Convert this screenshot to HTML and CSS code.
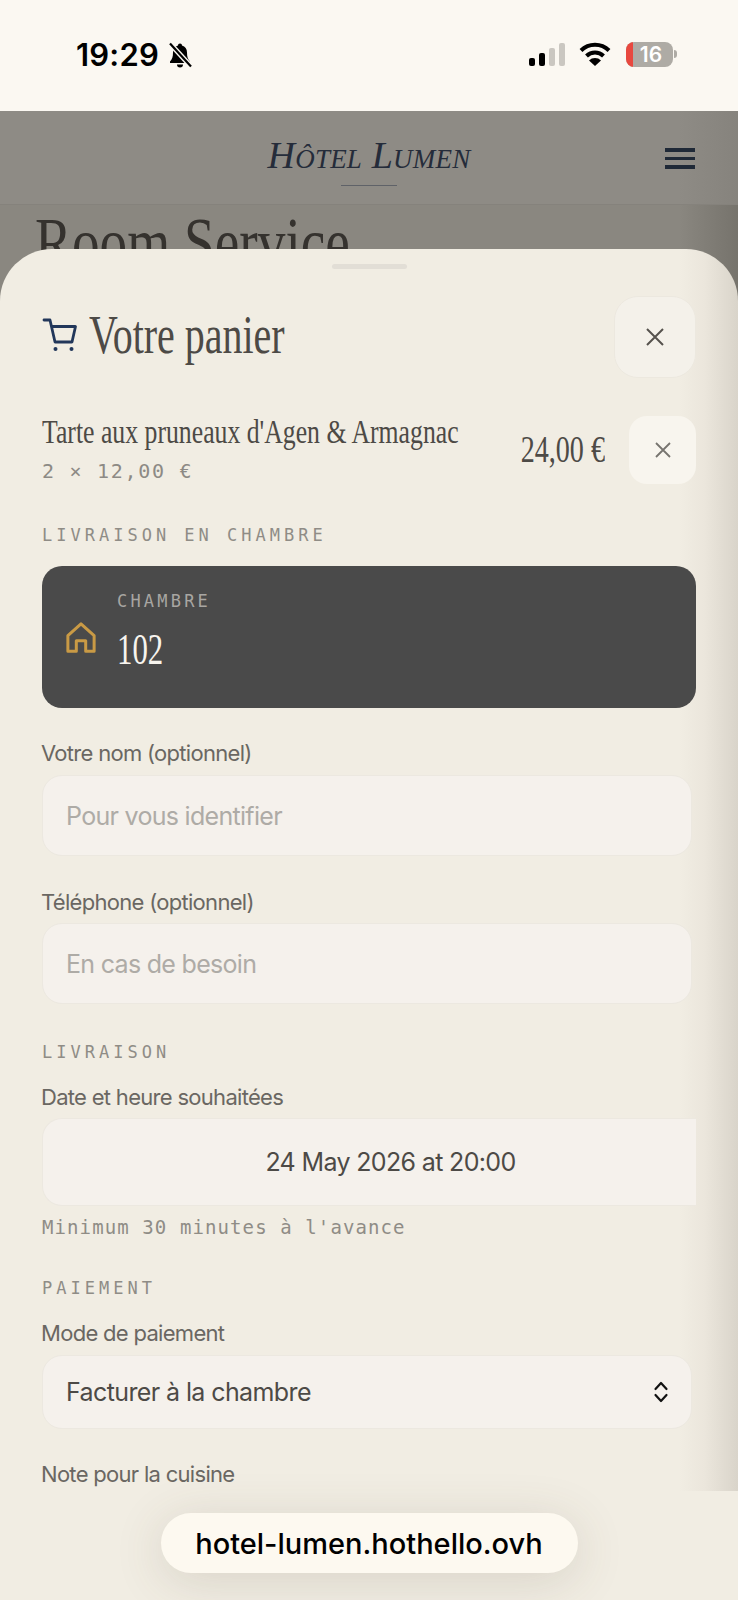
FILE: index.html
```html
<!DOCTYPE html>
<html lang="fr">
<head>
  <meta charset="UTF-8">
  <meta name="viewport" content="width=device-width, initial-scale=1.0">
  <title>Hôtel Lumen - Votre panier</title>
  <link rel="stylesheet" href="styles.css">
</head>
<body>
  <div class="statusbar">
    <div class="status-left">
      <span class="time">19:29</span>
      <svg class="bell" width="26" height="26" viewBox="0 0 26 26">
        <path d="M13 1.500c-1.200 0-2 .8-2 1.900C7.800 4.300 6 7 6 10.400c0 4.300-.8 6.600-3 9v1.600h20v-1.600c-2.200-2.400-3-4.700-3-9 0-3.400-1.800-6.100-5-7 0-1.100-.8-1.900-2-1.900z" fill="#000"/>
        <path d="M10 22.500a3 3 0 0 0 6 0z" fill="#000"/>
        <path d="M3 1.500l21 23" stroke="#fbf8f2" stroke-width="5"/>
        <path d="M3 1.500l21 23" stroke="#000" stroke-width="2.200"/>
      </svg>
    </div>
    <div class="status-right">
      <div class="signal">
        <span class="bar bar1"></span>
        <span class="bar bar2"></span>
        <span class="bar bar3"></span>
        <span class="bar bar4"></span>
      </div>
      <svg class="wifi" width="32" height="24" viewBox="0 0 32 24">
        <path d="M2 8.500a20 20 0 0 1 28 0" fill="none" stroke="#000" stroke-width="4"/>
        <path d="M7.500 14a12 12 0 0 1 17 0" fill="none" stroke="#000" stroke-width="4"/>
        <path d="M16 24l-6-5.500a8.500 8.500 0 0 1 12 0z" fill="#000"/>
      </svg>
      <div class="battery"><span class="battery-red"></span><span class="battery-num">16</span></div>
      <span class="battery-nub"></span>
    </div>
  </div>

  <header class="topbar">
    <div class="brand">
      <div class="brand-name">Hôtel Lumen</div>
      <div class="brand-line"></div>
    </div>
    <div class="burger"><span></span><span></span><span></span></div>
  </header>
  <div class="page-behind">
    <h1 class="page-title">Room Service</h1>
  </div>

  <section class="sheet">
    <div class="handle"></div>

    <div class="sheet-head">
      <div class="sheet-title">
        <svg class="cart" width="36" height="36" viewBox="0 0 36 36" fill="none" stroke="#22375a" stroke-width="2.800" stroke-linecap="round" stroke-linejoin="round">
          <path d="M2 3h6l5 22h17l3.500-15.500H9.500"/>
          <circle cx="13.500" cy="32" r="2" fill="#22375a" stroke="none"/>
          <circle cx="29.500" cy="32" r="2" fill="#22375a" stroke="none"/>
        </svg>
        <h2 class="serif title-text">Votre panier</h2>
      </div>
      <button class="close-btn">
        <svg width="20" height="20" viewBox="0 0 20 20"><path d="M2 2l16 16M18 2L2 18" stroke="#55524d" stroke-width="2"/></svg>
      </button>
    </div>

    <div class="item">
      <div class="item-info">
        <div class="serif item-name">Tarte aux pruneaux d'Agen &amp; Armagnac</div>
        <div class="item-sub">2 × 12,00 €</div>
      </div>
      <div class="serif item-price">24,00 €</div>
      <button class="remove-btn">
        <svg width="16" height="16" viewBox="0 0 16 16"><path d="M1 1l14 14M15 1L1 15" stroke="#77746f" stroke-width="1.800"/></svg>
      </button>
    </div>

    <div class="section-label first">LIVRAISON EN CHAMBRE</div>
    <div class="room-card">
      <svg class="home" width="30" height="32" viewBox="0 0 32 34" fill="none" stroke="#c99a45" stroke-width="3.200" stroke-linejoin="round">
        <path d="M2 14.500L16 2l14 12.500V31H21V20H11v11H2z"/>
      </svg>
      <div class="room-text">
        <div class="room-label">CHAMBRE</div>
        <div class="serif room-num">102</div>
      </div>
    </div>

    <label class="field-label first-field" for="nom">Votre nom (optionnel)</label>
    <input class="field" id="nom" type="text" placeholder="Pour vous identifier">

    <label class="field-label second-field" for="tel">Téléphone (optionnel)</label>
    <input class="field" id="tel" type="text" placeholder="En cas de besoin">

    <div class="section-label delivery">LIVRAISON</div>
    <div class="field-label tight">Date et heure souhaitées</div>
    <div class="date-field"><span>24 May 2026 at 20:00</span></div>
    <div class="hint">Minimum 30 minutes à l'avance</div>

    <div class="section-label payment">PAIEMENT</div>
    <div class="field-label tight">Mode de paiement</div>
    <div class="select-field">
      <span>Facturer à la chambre</span>
      <svg width="16" height="22" viewBox="0 0 16 22" fill="none" stroke="#111" stroke-width="2.200" stroke-linecap="round" stroke-linejoin="round">
        <path d="M2.500 8L8 2l5.500 6M2.500 14L8 20l5.500-6"/>
      </svg>
    </div>

    <div class="field-label note">Note pour la cuisine</div>
  </section>

  <footer class="urlbar">
    <div class="url-pill">hotel-lumen.hothello.ovh</div>
  </footer>
</body>
</html>
```

FILE: styles.css
```css
/* Base */
html, body {
  margin: 0;
  padding: 0;
  height: 1600px;
  overflow: hidden;
}
body {
  position: relative;
  font-family: Inter, "Noto Sans", sans-serif;
  background-color: #87847d;
}
h1, h2 {
  margin: 0;
  font-weight: 400;
}
button {
  padding: 0;
  border: none;
  display: flex;
  align-items: center;
  justify-content: center;
}
.serif {
  font-family: "Liberation Serif", serif;
  transform-origin: left center;
}

/* Status bar */
.statusbar {
  height: 111px;
  box-sizing: border-box;
  padding: 40px 61px 0 76px;
  background-color: #fbf8f2;
  display: flex;
  justify-content: space-between;
  align-items: flex-start;
}
.status-left {
  display: flex;
  align-items: center;
  gap: 8px;
}
.time {
  font-size: 31px;
  line-height: 30px;
  font-weight: 600;
  letter-spacing: 0.2px;
  color: #000;
}
.status-right {
  display: flex;
  align-items: flex-start;
  padding-top: 2px;
}
.signal {
  display: flex;
  align-items: flex-end;
  gap: 4px;
  height: 24px;
  margin-right: 14px;
}
.bar {
  width: 6px;
  border-radius: 2px;
  background-color: #000;
}
.bar1 { height: 8px; }
.bar2 { height: 13px; }
.bar3 { height: 18px; background-color: #cac7c1; }
.bar4 { height: 23px; background-color: #cac7c1; }
.wifi {
  margin-right: 15px;
}
.battery {
  position: relative;
  width: 47px;
  height: 25px;
  border-radius: 8px;
  overflow: hidden;
  background-color: #aeaba5;
  display: flex;
  align-items: center;
  justify-content: center;
}
.battery-red {
  position: absolute;
  left: 0;
  top: 0;
  bottom: 0;
  width: 7px;
  background-color: #e8483f;
}
.battery-num {
  font-size: 21px;
  font-weight: 600;
  color: #fff;
  padding-left: 3px;
}
.battery-nub {
  width: 3px;
  height: 8px;
  margin: 8px 0 0 1px;
  border-radius: 0 3px 3px 0;
  background-color: #aeaba5;
}

/* Page behind the sheet */
.topbar {
  height: 94px;
  box-sizing: border-box;
  padding: 24px 43px 0;
  background: linear-gradient(to right, #8e8b85 92%, #86837d 100%);
  border-bottom: 1px solid #85827c;
  display: grid;
  grid-template-columns: 1fr auto 1fr;
}
.brand {
  grid-column: 2;
  display: flex;
  flex-direction: column;
  align-items: center;
}
.brand-name {
  font-family: "Liberation Serif", serif;
  font-style: italic;
  font-variant: small-caps;
  font-size: 38px;
  line-height: 40px;
  letter-spacing: 0.2px;
  color: #252c3a;
  white-space: nowrap;
}
.brand-line {
  width: 56px;
  height: 1px;
  margin-top: 10px;
  background-color: #5f6268;
}
.burger {
  grid-column: 3;
  justify-self: end;
  width: 30px;
  padding-top: 13px;
  display: flex;
  flex-direction: column;
  gap: 5px;
}
.burger span {
  height: 3.500px;
  background-color: #1f2937;
}
.page-behind {
  height: 120px;
  padding: 0 0 0 35px;
  background: linear-gradient(to right, #8a8780 92%, #76736c 100%);
}
.page-title {
  font-family: "Liberation Serif", serif;
  font-size: 70px;
  line-height: 76px;
  color: #35322e;
  white-space: nowrap;
  transform: scaleX(.79);
  transform-origin: left center;
}

/* Sheet */
.sheet {
  position: absolute;
  left: 0;
  right: 0;
  top: 249px;
  height: 1351px;
  box-sizing: border-box;
  padding: 15px 42px 0;
  border-radius: 52px 52px 0 0;
  background: linear-gradient(to right, #f1ede3 92%, #ebe6dc 95.500%, #d9d4ca 100%);
  overflow: hidden;
}
.handle {
  width: 75px;
  height: 5px;
  margin: 0 auto;
  border-radius: 3px;
  background-color: #e2ded6;
}
.sheet-head {
  display: flex;
  justify-content: space-between;
  align-items: center;
  margin-top: 27px;
}
.sheet-title {
  display: flex;
  align-items: center;
  gap: 11px;
  margin-top: -4px;
}
.title-text {
  font-size: 54px;
  line-height: 60px;
  color: #4d4a46;
  white-space: nowrap;
  transform: scaleX(.74);
}
.close-btn {
  width: 82px;
  height: 82px;
  box-sizing: border-box;
  border: 1px solid #ece8df;
  border-radius: 24px;
  background-color: #f4f1ea;
}

/* Cart line */
.item {
  display: flex;
  align-items: center;
  height: 68px;
  margin-top: 38px;
}
.item-info {
  flex: 1;
  min-width: 0;
}
.item-name {
  font-size: 34px;
  line-height: 30px;
  margin-bottom: 12px;
  color: #4d4a46;
  white-space: nowrap;
  transform: scaleX(.757);
}
.item-sub {
  font-family: "DejaVu Sans Mono", monospace;
  font-size: 20px;
  line-height: 24px;
  letter-spacing: 1.700px;
  color: #8d8a85;
}
.item-price {
  margin-right: 24px;
  font-size: 37px;
  line-height: 40px;
  color: #4d4a46;
  white-space: nowrap;
  transform: scaleX(.76);
  transform-origin: right center;
}
.remove-btn {
  width: 67px;
  height: 68px;
  flex-shrink: 0;
  border-radius: 18px;
  background-color: #f8f5ee;
}

/* Section titles */
.section-label {
  font-family: "DejaVu Sans Mono", monospace;
  font-size: 17px;
  line-height: 22px;
  letter-spacing: 4px;
  color: #8f8c86;
  white-space: nowrap;
}
.section-label.first {
  margin-top: 40px;
}
.section-label.delivery {
  margin-top: 37px;
}
.section-label.payment {
  margin-top: 38px;
}

/* Room card */
.room-card {
  height: 142px;
  margin-top: 20px;
  padding-left: 24px;
  box-sizing: border-box;
  border-radius: 20px;
  background-color: #4a4a4a;
  display: flex;
  align-items: center;
  gap: 21px;
}
.home {
  margin-top: 2px;
}
.room-text {
  margin-top: -12px;
}
.room-label {
  font-family: "DejaVu Sans Mono", monospace;
  font-size: 17px;
  line-height: 22px;
  letter-spacing: 3.200px;
  color: #a8a6a2;
}
.room-num {
  margin-top: 15px;
  font-size: 44px;
  line-height: 46px;
  color: #f7f4ee;
  transform: scaleX(.7);
}

/* Forms */
.field-label {
  display: block;
  margin-left: -1px;
  font-size: 22px;
  line-height: 28px;
  letter-spacing: -0.7px;
  color: #6a6762;
}
.field-label.first-field {
  margin-top: 31px;
}
.field-label.second-field {
  margin-top: 32px;
}
.field-label.tight {
  margin-top: 20px;
}
.field-label.note {
  margin-top: 31px;
}
.field {
  display: block;
  width: 650px;
  height: 81px;
  margin-top: 7px;
  box-sizing: border-box;
  padding: 0 23px;
  border: 1px solid #ece8e0;
  border-radius: 20px;
  background-color: #f5f1ec;
  font-family: Inter, "Noto Sans", sans-serif;
  font-size: 25px;
  letter-spacing: -0.7px;
}
.field:first-of-type {
  margin-top: 8px;
}
.field::placeholder {
  color: #aeaba6;
  opacity: 1;
}
.date-field {
  height: 88px;
  margin-top: 7px;
  box-sizing: border-box;
  padding-left: 42px;
  border: 1px solid #ece8e0;
  border-right: none;
  border-radius: 20px 0 0 20px;
  background-color: #f5f1ec;
  display: flex;
  align-items: center;
  justify-content: center;
  font-size: 25px;
  letter-spacing: -0.65px;
  color: #4d4a46;
}
.hint {
  margin-top: 9px;
  font-family: "DejaVu Sans Mono", monospace;
  font-size: 19px;
  line-height: 24px;
  letter-spacing: 1.100px;
  color: #8f8c86;
  white-space: nowrap;
}
.select-field {
  width: 650px;
  height: 74px;
  margin-top: 8px;
  box-sizing: border-box;
  padding: 0 22px 0 23px;
  border: 1px solid #ece8e0;
  border-radius: 20px;
  background-color: #f5f1ec;
  display: flex;
  align-items: center;
  justify-content: space-between;
  font-size: 25px;
  letter-spacing: -0.6px;
  color: #4d4a46;
}

/* Address pill */
.urlbar {
  position: absolute;
  left: 0;
  right: 0;
  top: 1491px;
  bottom: 0;
  background-color: #f1ede3;
  display: flex;
  justify-content: center;
  padding-top: 22px;
  box-sizing: border-box;
}
.url-pill {
  width: 417px;
  height: 60px;
  border-radius: 30px;
  background-color: #fdf9f0;
  box-shadow: 0 8px 50px rgba(90, 75, 55, 0.16);
  display: flex;
  align-items: center;
  justify-content: center;
  font-size: 29px;
  font-weight: 500;
  color: #000;
}
```
